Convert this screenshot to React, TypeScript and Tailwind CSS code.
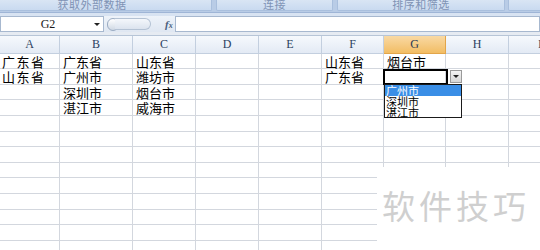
import React from "react";

const COLS = [
  { k: "A", w: 60 },
  { k: "B", w: 73 },
  { k: "C", w: 63 },
  { k: "D", w: 63 },
  { k: "E", w: 63 },
  { k: "F", w: 62 },
  { k: "G", w: 62 },
  { k: "H", w: 63 },
  { k: "I", w: 63 },
];

const DATA: Record<number, Record<string, string>> = {
  0: { A: "广东省", B: "广东省", C: "山东省", F: "山东省", G: "烟台市" },
  1: { A: "山东省", B: "广州市", C: "潍坊市", F: "广东省" },
  2: { B: "深圳市", C: "烟台市" },
  3: { B: "湛江市", C: "威海市" },
};

const cjk = { fontFamily: '"Noto Sans CJK SC", "Noto Sans", sans-serif' };
const serif = { fontFamily: '"Liberation Serif", "DejaVu Serif", serif' };

function Ribbon() {
  const groups = [
    { label: "获取外部数据", w: 240, ml: -28 },
    { label: "连接", w: 117, ml: 4 },
    { label: "排序和筛选", w: 168, ml: 4 },
    { label: "", w: 60, ml: 3 },
  ];
  return (
    <div className="flex h-[12px] shrink-0 overflow-hidden bg-[#b9cce6]">
      {groups.map((g, i) => (
        <div
          key={i}
          style={{ width: g.w, marginLeft: g.ml }}
          className="h-[11px] shrink-0 rounded-b-[2px] bg-gradient-to-b from-[#d9e5f4] to-[#c9daf0] border-x border-b border-[#a9bfdd] flex justify-center items-start"
        >
          <span
            style={cjk}
            className="text-[11px] leading-[11px] -mt-[1px] text-[#7f93b5] tracking-[0.5px]"
          >
            {g.label}
          </span>
        </div>
      ))}
    </div>
  );
}

function FormulaRow() {
  return (
    <div className="flex h-[16px] shrink-0 bg-gradient-to-b from-[#eef3fa] to-[#dfe7f2]">
      <div className="w-[104px] shrink-0 bg-white border border-[#a7b8cf] flex items-center relative">
        <span style={serif} className="flex-1 text-center text-[12px] leading-none text-[#1a1a1a] pr-[8px]">
          G2
        </span>
        <span className="absolute right-[3px] top-[6px] w-0 h-0 border-x-[3px] border-x-transparent border-t-[3px] border-t-[#222]" />
      </div>
      <div className="w-[71px] shrink-0 flex items-center relative">
        <div className="ml-[3px] w-[12px] h-[13px] rounded-full bg-gradient-to-b from-[#ffffff] to-[#cfd8e4] border border-[#9aabc2]" />
        <div className="ml-[-4px] w-[36px] h-[12px] rounded-r-full bg-gradient-to-b from-[#f4f7fb] to-[#dbe3ee] border-y border-r border-[#b4c2d4]" />
        <span style={serif} className="ml-[14px] text-[11px] italic text-[#4a5f7e] font-bold leading-none">
          f<span className="text-[8px]">x</span>
        </span>
      </div>
      <div className="flex-1 bg-white border border-[#a7b8cf]" />
    </div>
  );
}

function Header() {
  return (
    <div className="flex h-[18.7px] shrink-0 border-t border-[#b7c5d7]">
      {COLS.map((c) => (
        <div
          key={c.k}
          style={{ width: c.w }}
          className={
            "shrink-0 flex justify-center pt-[2px] border-r border-b " +
            (c.k === "G"
              ? "bg-gradient-to-b from-[#f9d9a3] to-[#f2bd63] border-[#e2a54a] text-[#2b3a52]"
              : "bg-gradient-to-b from-[#f6f9fd] to-[#e3eaf4] border-[#c3cfdf] text-[#2b3f5e]")
          }
        >
          <span style={serif} className="text-[12px] leading-[12px]">
            {c.k}
          </span>
        </div>
      ))}
    </div>
  );
}

function Grid() {
  const rows = Array.from({ length: 13 }, (_, i) => i);
  return (
    <div className="flex flex-col">
      {rows.map((r) => (
        <div key={r} className="flex h-[15.6px] shrink-0">
          {COLS.map((c) => {
            const v = DATA[r]?.[c.k] ?? "";
            return (
              <div
                key={c.k}
                style={{ width: c.w, ...cjk }}
                className={
                  "shrink-0 border-r border-b border-[#d3d7de] text-[13px] leading-[15px] text-black whitespace-nowrap " +
                  (c.k === "A" ? "pl-[2px] tracking-[1.5px]" : "pl-[3px]")
                }
              >
                {v}
              </div>
            );
          })}
        </div>
      ))}
    </div>
  );
}

export default function App() {
  return (
    <div className="relative w-[540px] h-[250px] overflow-hidden bg-white">
      <div className="flex flex-col w-[540px]">
        <Ribbon />
        <div className="h-[4px] shrink-0 border-t border-[#9fb5d6] bg-[#d8e3f2]" />
        <FormulaRow />
        <div className="h-[3px] shrink-0 bg-[#e6ebf2]" />
        <Header />
        <Grid />
      </div>

      {/* selected cell G2 */}
      <div className="absolute left-[383px] top-[68.5px] w-[65px] h-[16px] border-2 border-black" />
      {/* dropdown button */}
      <div className="absolute left-[450px] top-[70px] w-[12px] h-[13px] bg-gradient-to-b from-[#f4f4f4] to-[#d6d6d6] border border-[#9a9a9a] flex items-center justify-center">
        <span className="w-0 h-0 border-x-[3px] border-x-transparent border-t-[3px] border-t-[#222]" />
      </div>
      {/* dropdown list */}
      <div
        style={cjk}
        className="absolute left-[384px] top-[84px] w-[78px] h-[34px] bg-white border border-[#1a1a1a] flex flex-col text-[11px] leading-[11px]"
      >
        <div className="bg-[#3a8ee6] text-white pl-[1px] h-[11px]">广州市</div>
        <div className="text-black pl-[1px] h-[11px]">深圳市</div>
        <div className="text-black pl-[1px] h-[10px]">湛江市</div>
      </div>

      {/* watermark */}
      <div className="absolute left-[377px] top-[167px] w-[170px] h-[90px] bg-white flex items-start">
        <span
          style={cjk}
          className="mt-[18px] ml-[5px] text-[33px] leading-[40px] tracking-[4px] text-[#cfcfcf]"
        >
          软件技巧
        </span>
      </div>
    </div>
  );
}
